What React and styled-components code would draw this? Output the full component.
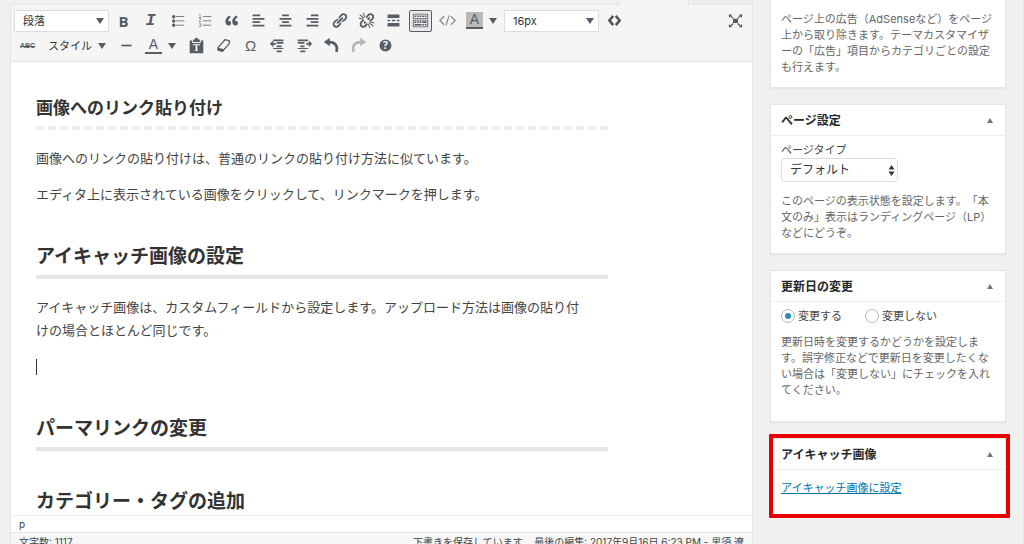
import { useState } from "react";
import styled, { createGlobalStyle, css } from "styled-components";

const GlobalStyle = createGlobalStyle`
  * {
    box-sizing: border-box;
  }
  body {
    margin: 0;
    background: #f0f0f0;
    color: #444;
    font-family: Inter, "Noto Sans CJK JP", sans-serif;
    font-size: 11px;
    line-height: 16px;
    text-spacing-trim: space-all;
  }
  button, select, input {
    font: inherit;
    color: inherit;
    margin: 0;
  }
`

const Shell = styled.div`
  display: flex;
  align-items: flex-start;
  gap: 17px;
  height: 100vh;
  padding: 0 17px 0 10px;
  overflow: hidden;
  border-right: 1px solid #e6e6e6;
`
const EditorColumn = styled.main`
  flex: 1;
  min-width: 0;
`
const TabStrip = styled.div`
  display: flex;
  justify-content: flex-end;
  gap: 4px;
  height: 5px;
  border-bottom: 1px solid #e5e5e5;
`
const Tab = styled.button`
  width: 60px;
  height: 4px;
  padding: 0;
  background: #ebebeb;
  border: 1px solid #e5e5e5;
  border-width: 0 1px;

  &.active {
    width: 70px;
    height: 5px;
    background: #f5f5f5;
  }
`
const Editor = styled.div`
  border: 1px solid #e5e5e5;
  border-top: none;
  background: #fff;
`
const Toolbar = styled.div`
  padding: 3px 3px 3px;
  background: #f5f5f5;
  border-bottom: 1px solid #e5e5e5;
  color: #555d66;
`
const ToolRow = styled.div`
  display: flex;
  align-items: center;
  height: 25px;
`
const ToolButton = styled.button`
  display: flex;
  align-items: center;
  justify-content: center;
  width: 27px;
  height: 24px;
  padding: 0;
  background: none;
  border: none;
  cursor: pointer;

  svg {
    width: 17px;
    height: 17px;
    fill: currentColor;
  }
  ${(props) => props.$pressed && css`
    width: 23px;
    height: 22px;
    margin: 0 2px;
    background: #ebebeb;
    border: 1px solid #555d66;
    border-radius: 2px;
  `}
  ${(props) => props.$faded && css`
    opacity: 0.4;
  `}
`
const EndButton = styled(ToolButton)`
  margin-left: auto;
`
const Letter = styled.span`
  font-family: "Open Sans", sans-serif;
  font-size: 15px;
  font-weight: 700;
  line-height: 16px;

  &.italic {
    font-family: "Liberation Mono", monospace;
    font-style: italic;
    font-size: 17px;
  }
  &.omega {
    font-family: "Liberation Sans", sans-serif;
    font-size: 15px;
    font-weight: 400;
  }
  &.strike {
    font-family: "Liberation Sans", sans-serif;
    font-size: 7px;
    text-decoration: line-through;
  }
`
const ColorLetter = styled.span`
  width: 17px;
  height: 17px;
  background: ${(props) => props.$fill || 'transparent'};
  border-bottom: 2px solid #555d66;
  font-family: "Liberation Sans", sans-serif;
  font-size: 14px;
  line-height: 15px;
  text-align: center;
`
const Caret = styled.span`
  border: 4px solid transparent;
  border-top: 6px solid #555d66;
  border-bottom: none;
`
const CaretButton = styled.button`
  display: flex;
  align-items: center;
  justify-content: center;
  width: 10px;
  height: 22px;
  margin-right: 6px;
  padding: 0;
  border: none;
  background: none;
`
const MenuButton = styled.button`
  display: flex;
  align-items: center;
  justify-content: space-between;
  width: 72px;
  padding: 0 7px;
  background: none;
  border: none;
  color: #333;
  font-size: 11px;
`
const ListBox = styled.span`
  position: relative;
  width: 95px;
  margin-right: ${(props) => props.$gap || 1}px;

  select {
    appearance: none;
    display: block;
    width: 100%;
    height: 22px;
    padding: 0 8px;
    background: #fff;
    border: 1px solid #ddd;
    border-radius: 0;
    color: #333;
    font-size: 11px;
  }
  ${Caret} {
    position: absolute;
    top: 8px;
    right: 5px;
    pointer-events: none;
  }
`
const Content = styled.article`
  max-width: 622px;
  padding: 33px 25px 0;
  color: #444;
  font-size: 13px;
  line-height: 23px;

  p {
    margin: 0 0 13px;
    min-height: 23px;
  }
  h2, h3 {
    margin: 37px 0 17px;
    padding-bottom: 4px;
    color: #333;
    font-size: 19px;
    line-height: 28px;
    font-weight: 700;
    border-bottom: 4px solid #e6e6e6;
  }
  h3 {
    margin-top: 0;
    padding-bottom: 5px;
    font-size: 17px;
    line-height: 26px;
    border-bottom: 4px dashed #eee;
  }
  h2.last {
    margin: 38px 0 0;
    padding-bottom: 0;
    line-height: 26px;
    border-bottom: none;
  }
`
const TextCursor = styled.span`
  display: inline-block;
  width: 1px;
  height: 16px;
  background: #333;
  vertical-align: middle;
`
const PathBar = styled.div`
  height: 17px;
  padding: 0 8px;
  border-top: 1px solid #eee;
  font-size: 10px;
  line-height: 17px;
`
const StatusBar = styled.div`
  display: flex;
  justify-content: space-between;
  padding: 1px 8px;
  background: #f7f7f7;
  border-top: 1px solid #e5e5e5;
  font-size: 10px;
  line-height: 16px;
`

const Sidebar = styled.aside`
  display: flex;
  flex-direction: column;
  gap: 16px;
  width: 236px;
  flex-shrink: 0;
`
const Panel = styled.section`
  position: relative;
  background: #fff;
  border: 1px solid #e5e5e5;
  box-shadow: 0 1px 1px rgba(0, 0, 0, 0.04);

  &.first {
    border-top: none;
  }
  &.marked::after {
    content: "";
    position: absolute;
    inset: -5px -5px -4px -2px;
    border: 4px solid #e60000;
    border-radius: 1px;
    pointer-events: none;
  }
`
const PanelHead = styled.header`
  display: flex;
  align-items: center;
  justify-content: space-between;
  height: 31px;
  padding: 1px 10px 0;
  border-bottom: 1px solid #eee;

  h2 {
    margin: 0;
    color: #23282d;
    font-size: 12px;
    line-height: 16px;
    font-weight: 700;
  }
  button {
    display: flex;
    padding: 2px;
    background: none;
    border: none;
  }
  button span {
    border: 3px solid transparent;
    border-top: none;
    border-bottom: 5px solid #72777c;
  }
`
const PanelBody = styled.div`
  padding: ${(props) => props.$pad || '6px 10px 12px'};

  a {
    color: #0073aa;
  }
`
const Note = styled.p`
  margin: 0;
  color: #666;
`
const Field = styled.div`
  margin-bottom: 11px;

  label {
    display: block;
  }
`
const SelectWrap = styled.div`
  position: relative;
  width: 117px;

  select {
    appearance: none;
    display: block;
    width: 100%;
    height: 24px;
    padding: 0 8px;
    background: #fff;
    border: 1px solid #ddd;
    border-radius: 4px;
    font-size: 12px;
    color: #32373c;
  }
  svg {
    position: absolute;
    top: 7px;
    right: 3px;
    width: 7px;
    height: 11px;
    fill: #32373c;
    pointer-events: none;
  }
`
const RadioRow = styled.div`
  display: flex;
  gap: 23px;
  margin-bottom: 10px;
`
const Radio = styled.label`
  display: flex;
  align-items: center;
  gap: 3px;

  input {
    appearance: none;
    display: grid;
    place-items: center;
    width: 14px;
    height: 14px;
    background: #fff;
    border: 1px solid #b4b9be;
    border-radius: 50%;
  }
  input:checked::before {
    content: "";
    width: 6px;
    height: 6px;
    border-radius: 50%;
    background: #1e8cbe;
  }
`

const linkPath = "M17.74 2.76c1.68 1.69 1.68 4.41 0 6.1l-1.53 1.52c-1.12 1.12-2.7 1.47-4.14 1.09l2.62-2.61.76-.77.76-.76c.84-.84.84-2.2 0-3.04-.84-.85-2.2-.85-3.04 0l-.77.76-3.38 3.38c-.37-1.44-.02-3.02 1.1-4.14l1.52-1.53c1.69-1.68 4.42-1.68 6.1 0zM8.59 13.43l5.34-5.34c.42-.42.42-1.1 0-1.52-.44-.43-1.13-.39-1.53 0l-5.33 5.34c-.42.42-.42 1.1 0 1.52.44.43 1.13.39 1.52 0zm-.76 2.29l4.14-4.15c.38 1.44.03 3.02-1.09 4.14l-1.52 1.53c-1.69 1.68-4.41 1.68-6.1 0-1.68-1.68-1.68-4.42 0-6.1l1.53-1.52c1.12-1.12 2.7-1.47 4.14-1.1l-4.14 4.15c-.85.84-.85 2.2 0 3.05.84.84 2.2.84 3.04 0z"

const paths = {
  bullets: "M5.500 7.500a2 2 0 1 1 0-4 2 2 0 0 1 0 4zM8 5h10v1H8zM5.500 12.500a2 2 0 1 1 0-4 2 2 0 0 1 0 4zM8 10h10v1H8zM5.500 17.500a2 2 0 1 1 0-4 2 2 0 0 1 0 4zM8 15h10v1H8z",
  quote: "M9.49 13.22c0-.74-.2-1.38-.61-1.9-.62-.78-1.83-.88-2.53-.72-.29-1.65 1.11-3.75 2.92-4.65L7.88 4c-2.73 1.3-5.42 4.28-4.96 8.05C3.21 14.43 4.59 16 6.54 16c.85 0 1.56-.25 2.12-.75s.83-1.18.83-2.03zm8.05 0c0-.74-.2-1.38-.61-1.9-.63-.78-1.83-.88-2.53-.72-.29-1.65 1.11-3.75 2.92-4.65L15.93 4c-2.73 1.3-5.41 4.28-4.95 8.05.29 2.38 1.66 3.95 3.61 3.95.85 0 1.56-.25 2.12-.75s.83-1.18.83-2.03z",
  left: "M12 5V3H3v2h9zm5 4V7H3v2h14zm-5 4v-2H3v2h9zm5 4v-2H3v2h14z",
  center: "M14 5V3H6v2h8zm3 4V7H3v2h14zm-3 4v-2H6v2h8zm3 4v-2H3v2h14z",
  right: "M17 5V3H8v2h9zm0 4V7H3v2h14zm0 4v-2H8v2h9zm0 4v-2H3v2h14z",
  link: linkPath,
  more: "M17 7H3V3h14v4zM6 11H3V9h3v2zm6 0H8V9h4v2zm5 0h-3V9h3v2zm0 6H3v-4h14v4z",
  sink: "M19 2v6H1V2h18zm-1 5V3H2v4h16zM5 4v2H3V4h2zm3 0v2H6V4h2zm3 0v2H9V4h2zm3 0v2h-2V4h2zm3 0v2h-2V4h2zm2 5v9H1V9h18zm-1 8v-7H2v7h16zM5 11v2H3v-2h2zm3 0v2H6v-2h2zm3 0v2H9v-2h2zm6 0v2h-5v-2h5zm-6 3v2H3v-2h8zm3 0v2h-2v-2h2zm3 0v2h-2v-2h2z",
  rule: "M4 9h12v2H4z",
  outdent: "M5 3h12v2H5zM9 6h8v2H9zM9 10h6v2H9zM5 13h12v1H5zM9 16h6v2H9zM1 8l4-4v3h3v2H5v3z",
  indent: "M2 3h12v2H2zM2 6h8v2H2zM5 10h5v2H5zM2 13h12v1H2zM5 16h6v2H5zM19 8l-4-4v3h-3v2h3v3z",
  undo: "M1 6l7-5v3.500c6 0 10 4 10 9.500 0 1.500-.3 2.800-.8 4l-3-.9c.4-1 .6-2 .6-3C14.800 10.300 12.500 8 8 8v3z",
  redo: "M19 6l-7-5v3.500c-6 0-10 4-10 9.500 0 1.500.3 2.800.8 4l3-.9c-.4-1-.6-2-.6-3C5.200 10.300 7.500 8 12 8v3z",
  full: "M7 8h6v5H7zM2 3h4L5 4.300 8 7 7 8 4 5.300 2.500 7zM18 3h-4l1 1.300L12 7l1 1 3-2.700L17.500 7zM2 18h4l-1-1.300L8 14l-1-1-3 2.700L2.500 14zM18 18h-4l1-1.300L12 14l1-1 3 2.700 1.500-1.700z",
}

const Icon = ({ name }) => (
  <svg viewBox="0 0 20 20" aria-hidden="true"><path d={paths[name]} /></svg>
)

const NumberedIcon = () => (
  <svg viewBox="0 0 20 20" aria-hidden="true">
    <path d="M8 5h10v1H8zM8 10h10v1H8zM8 15h10v1H8z" />
    <g fontFamily="Liberation Sans" fontSize="6">
      <text x="3" y="7">1</text>
      <text x="3" y="12">2</text>
      <text x="3" y="18">3</text>
    </g>
  </svg>
)

const UnlinkIcon = () => (
  <svg viewBox="0 0 20 20" aria-hidden="true">
    <path d={linkPath} />
    <path d="M5 5l10 10" stroke="#f5f5f5" strokeWidth="3.500" />
    <path d="M2 3l5 4.500M6 1l2 5M1 7l5 1.500M18 17l-5-4.500M14 19l-2-5M19 13l-5-1.500" stroke="currentColor" strokeWidth="1.300" />
  </svg>
)

const CodeIcon = () => (
  <svg viewBox="0 0 20 20" aria-hidden="true">
    <path d="M6 5l-5 5 5 5M14 5l5 5-5 5M12 4L8 16" style={{ fill: 'none' }} stroke="#82878c" strokeWidth="1.400" />
  </svg>
)

const AngleIcon = () => (
  <svg viewBox="0 0 20 20" aria-hidden="true">
    <path d="M8.500 4.500L4 10l4.500 5.500M11.500 4.500L16 10l-4.500 5.500" style={{ fill: 'none' }} stroke="#555" strokeWidth="3" />
  </svg>
)

const PasteIcon = () => (
  <svg viewBox="0 0 20 20" aria-hidden="true">
    <path d="M2 4h3v3h10V4h3v15H2zM6 3h2c0-3 4-3 4 0h2v3H6z" />
    <text x="10" y="17" fontFamily="Liberation Serif" fontSize="12" fontWeight="700" textAnchor="middle" fill="#fff">T</text>
  </svg>
)

const EraserIcon = () => (
  <svg viewBox="0 0 20 20" aria-hidden="true">
    <path d="M12 3l5 1.500v3L8.500 17l-5-1.500v-3z" style={{ fill: 'none' }} stroke="currentColor" strokeWidth="1.500" strokeLinejoin="round" />
    <path d="M3.500 12.500v3l5 1.500 2-2.300-2-1z" />
  </svg>
)

const HelpIcon = () => (
  <svg viewBox="0 0 20 20" aria-hidden="true">
    <circle cx="10" cy="10" r="7" />
    <text x="10" y="14" fontFamily="Open Sans" fontSize="12" fontWeight="700" textAnchor="middle" fill="#fff">?</text>
  </svg>
)

const Tool = ({ label, name, children, ...rest }) => (
  <ToolButton type="button" aria-label={label} {...rest}>
    {name ? <Icon name={name} /> : children}
  </ToolButton>
)

const Box = ({ title, className, pad, children }) => (
  <Panel className={className}>
    <PanelHead>
      <h2>{title}</h2>
      <button type="button" aria-label={title}><span /></button>
    </PanelHead>
    <PanelBody $pad={pad}>{children}</PanelBody>
  </Panel>
)

const EditorToolbar = () => (
  <Toolbar>
    <ToolRow>
      <ListBox>
        <select aria-label="書式"><option>段落</option></select>
        <Caret />
      </ListBox>
      <Tool label="太字"><Letter>B</Letter></Tool>
      <Tool label="イタリック"><Letter className="italic">I</Letter></Tool>
      <Tool label="番号なしリスト" name="bullets" />
      <Tool label="番号付きリスト"><NumberedIcon /></Tool>
      <Tool label="引用" name="quote" />
      <Tool label="左寄せ" name="left" />
      <Tool label="中央揃え" name="center" />
      <Tool label="右寄せ" name="right" />
      <Tool label="リンクの挿入" name="link" />
      <Tool label="リンクの削除"><UnlinkIcon /></Tool>
      <Tool label="続きを読む" name="more" />
      <Tool label="ツールバー切り替え" name="sink" $pressed />
      <Tool label="コード"><CodeIcon /></Tool>
      <Tool label="背景色"><ColorLetter $fill="#b9b9b9">A</ColorLetter></Tool>
      <CaretButton type="button" aria-label="背景色を選択"><Caret /></CaretButton>
      <ListBox $gap={2}>
        <select aria-label="フォントサイズ"><option>16px</option></select>
        <Caret />
      </ListBox>
      <Tool label="ソースコード"><AngleIcon /></Tool>
      <EndButton type="button" aria-label="集中執筆モード"><Icon name="full" /></EndButton>
    </ToolRow>
    <ToolRow>
      <Tool label="打ち消し"><Letter className="strike">ABC</Letter></Tool>
      <MenuButton type="button">スタイル<Caret /></MenuButton>
      <Tool label="横ライン" name="rule" />
      <Tool label="テキスト色"><ColorLetter>A</ColorLetter></Tool>
      <CaretButton type="button" aria-label="テキスト色を選択"><Caret /></CaretButton>
      <Tool label="テキストとしてペースト"><PasteIcon /></Tool>
      <Tool label="書式設定をクリア"><EraserIcon /></Tool>
      <Tool label="特殊文字"><Letter className="omega">Ω</Letter></Tool>
      <Tool label="インデントを減らす" name="outdent" />
      <Tool label="インデントを増やす" name="indent" />
      <Tool label="取り消し" name="undo" />
      <Tool label="やり直し" name="redo" $faded />
      <Tool label="ヘルプ"><HelpIcon /></Tool>
    </ToolRow>
  </Toolbar>
)

const App = () => {
  const [update, setUpdate] = useState('yes');
  return (
    <>
      <GlobalStyle />
      <Shell>
        <EditorColumn>
          <TabStrip>
            <Tab className="active" type="button" aria-label="ビジュアル" />
            <Tab type="button" aria-label="テキスト" />
          </TabStrip>
          <Editor>
            <EditorToolbar />
            <Content>
              <h3>画像へのリンク貼り付け</h3>
              <p>画像へのリンクの貼り付けは、普通のリンクの貼り付け方法に似ています。</p>
              <p>エディタ上に表示されている画像をクリックして、リンクマークを押します。</p>
              <h2>アイキャッチ画像の設定</h2>
              <p>
                アイキャッチ画像は、カスタムフィールドから設定します。アップロード方法は画像の貼り付<br />
                けの場合とほとんど同じです。
              </p>
              <p><TextCursor /></p>
              <h2>パーマリンクの変更</h2>
              <h2 className="last">カテゴリー・タグの追加</h2>
            </Content>
            <PathBar>p</PathBar>
            <StatusBar>
              <span>文字数: 1117</span>
              <span>下書きを保存しています... 最後の編集: 2017年9月16日 6:23 PM - 黒須 遼</span>
            </StatusBar>
          </Editor>
        </EditorColumn>
        <Sidebar>
          <Panel className="first">
            <PanelBody $pad="11px 10px 12px">
              <Note>ページ上の広告（AdSenseなど）をページ上から取り除きます。テーマカスタマイザーの「広告」項目からカテゴリごとの設定も行えます。</Note>
            </PanelBody>
          </Panel>
          <Box title="ページ設定">
            <Field>
              <label htmlFor="page-type">ページタイプ</label>
              <SelectWrap>
                <select id="page-type"><option>デフォルト</option></select>
                <svg viewBox="0 0 7 11" aria-hidden="true"><path d="M3.500 0L6.500 4.500h-6zM3.500 11L.5 6.500h6z" /></svg>
              </SelectWrap>
            </Field>
            <Note>このページの表示状態を設定します。「本文のみ」表示はランディングページ（LP）などにどうぞ。</Note>
          </Box>
          <Box title="更新日の変更" pad="6px 10px 23px">
            <RadioRow>
              <Radio>
                <input type="radio" name="update" checked={update == 'yes'} onChange={() => { setUpdate('yes') }} />
                変更する
              </Radio>
              <Radio>
                <input type="radio" name="update" checked={update == 'no'} onChange={() => { setUpdate('no') }} />
                変更しない
              </Radio>
            </RadioRow>
            <Note>更新日時を変更するかどうかを設定します。誤字修正などで更新日を変更したくない場合は「変更しない」にチェックを入れてください。</Note>
          </Box>
          <Box title="アイキャッチ画像" className="marked" pad="10px 10px 18px">
            <a href="#featured">アイキャッチ画像に設定</a>
          </Box>
        </Sidebar>
      </Shell>
    </>
  )
}

export default App;
